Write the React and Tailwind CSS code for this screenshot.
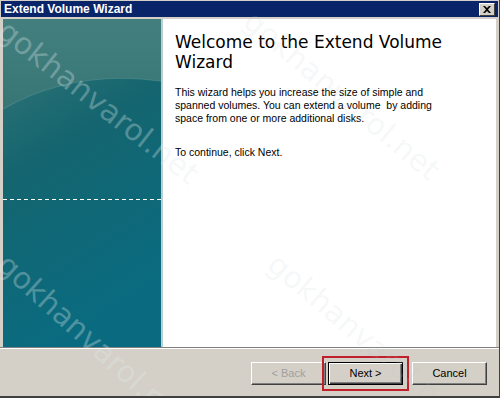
import React from "react";

function TealPanel() {
  return (
    <svg width="158" height="328" viewBox="0 0 158 328" className="block">
      <defs>
        <linearGradient id="tg" x1="0" y1="0" x2="0.3" y2="1">
          <stop offset="0" stopColor="#3a7878" />
          <stop offset="0.45" stopColor="#14656f" />
          <stop offset="1" stopColor="#0a6b80" />
        </linearGradient>
        <linearGradient id="tu" x1="0" y1="0" x2="0" y2="1">
          <stop offset="0" stopColor="#437f7f" />
          <stop offset="1" stopColor="#387676" />
        </linearGradient>
      </defs>
      <rect x="0" y="0" width="158" height="328" fill="url(#tg)" />
      <path d="M0 0 H158 V62 Q70 50 0 90 Z" fill="url(#tu)" />
      <path d="M0 90 Q70 50 158 62" stroke="#4f8a8a" strokeWidth="1.2" fill="none" opacity="0.7" />
      <line x1="0" y1="180.5" x2="158" y2="180.5" stroke="#ffffff" strokeWidth="1" strokeDasharray="4 3" />
    </svg>
  );
}

function Btn({ children, disabled, focused }) {
  return (
    <div
      className={
        "w-[75px] h-[23px] bg-[#d4d0c8] flex items-center justify-center text-[11px] " +
        (focused
          ? "border border-black shadow-[inset_1px_1px_0_#ffffff,inset_-1px_-1px_0_#404040,inset_-2px_-2px_0_#808080]"
          : "border-t border-l border-t-white border-l-white border-r border-b border-r-[#404040] border-b-[#404040] shadow-[inset_-1px_-1px_0_#808080]") +
        (disabled ? " text-[#a0a0a0]" : " text-black")
      }
      style={{ fontFamily: '"Liberation Sans", Arial, sans-serif' }}
    >
      {children}
    </div>
  );
}

export default function App() {
  const wm = "rgba(225,235,235,0.32)";
  const wm2 = "rgba(190,195,200,0.12)";
  const wf = '"DejaVu Sans", sans-serif';
  return (
    <div
      className="relative w-[500px] h-[398px] bg-[#d4d0c8] overflow-hidden flex flex-col border-r-[1px] border-r-[#404040] border-b-[2px] border-b-[#404040]"
      style={{ fontFamily: '"Liberation Sans", Arial, sans-serif' }}
    >
      {/* title bar */}
      <div className="mt-[1px] mx-[1px] h-[16px] bg-[#0a246a] flex items-center justify-between pl-[3px] pr-[3px]">
        <span className="text-white font-bold text-[12px] leading-none">Extend Volume Wizard</span>
        <div className="w-[16px] h-[13px] bg-[#d4d0c8] flex items-center justify-center border-t border-l border-t-white border-l-white border-r border-b border-r-[#404040] border-b-[#404040]">
          <svg width="8" height="7" viewBox="0 0 8 7">
            <path d="M0 0 L2 0 L4 2 L6 0 L8 0 L5 3.5 L8 7 L6 7 L4 5 L2 7 L0 7 L3 3.5 Z" fill="#000" />
          </svg>
        </div>
      </div>
      {/* content */}
      <div className="mt-[2px] ml-[3px] mr-[3px] h-[328px] flex bg-white">
        <div className="w-[158px] shrink-0">
          <TealPanel />
        </div>
        <div className="w-[2px] bg-[#b9cfd2]" />
        <div className="flex-1 pl-[12px] pt-[13px] pr-[10px]">
          <div
            className="text-[17px] leading-[20px] text-black"
            style={{ fontFamily: '"DejaVu Sans", Verdana, sans-serif' }}
          >
            Welcome to the Extend Volume
            <br />
            Wizard
          </div>
          <div className="mt-[14px] text-[10.5px] leading-[13px] text-black">
            This wizard helps you increase the size of simple and
            <br />
            spanned volumes. You can extend a volume&nbsp; by adding
            <br />
            space from one or more additional disks.
          </div>
          <div className="mt-[21px] text-[10.5px] leading-[13px] text-black">To continue, click Next.</div>
        </div>
      </div>
      {/* separator */}
      <div className="h-[1px] bg-[#808080]" />
      <div className="h-[1px] bg-white" />
      {/* footer */}
      <div className="flex-1 flex items-start justify-end pt-[13px] pr-[12px]">
        <div className="flex">
          <Btn disabled>&lt; Back</Btn>
          <div className="relative ml-[2px]">
            <Btn focused>Next &gt;</Btn>
            <div className="absolute left-[-6px] top-[-6px] w-[87px] h-[35px] border-2 border-[#c0202a]" />
          </div>
          <div className="w-[9px]" />
          <Btn>Cancel</Btn>
        </div>
      </div>

      {/* watermark */}
      <div className="pointer-events-none absolute inset-0">
        <span
          className="absolute left-[2px] top-[12px] text-[30px] leading-none whitespace-nowrap origin-left"
          style={{ color: wm, transform: "rotate(38deg)", fontFamily: wf }}
        >
          gokhanvarol.net
        </span>
        <span
          className="absolute left-[2px] top-[245px] text-[30px] leading-none whitespace-nowrap origin-left"
          style={{ color: wm, transform: "rotate(42deg)", fontFamily: wf }}
        >
          gokhanvarol.net
        </span>
        <span
          className="absolute left-[248px] top-[2px] text-[30px] leading-none whitespace-nowrap origin-left"
          style={{ color: wm2, transform: "rotate(40deg)", fontFamily: wf }}
        >
          gokhanvarol.net
        </span>
        <span
          className="absolute left-[272px] top-[245px] text-[30px] leading-none whitespace-nowrap origin-left"
          style={{ color: wm2, transform: "rotate(40deg)", fontFamily: wf }}
        >
          gokhanvarol.net
        </span>
      </div>
    </div>
  );
}
